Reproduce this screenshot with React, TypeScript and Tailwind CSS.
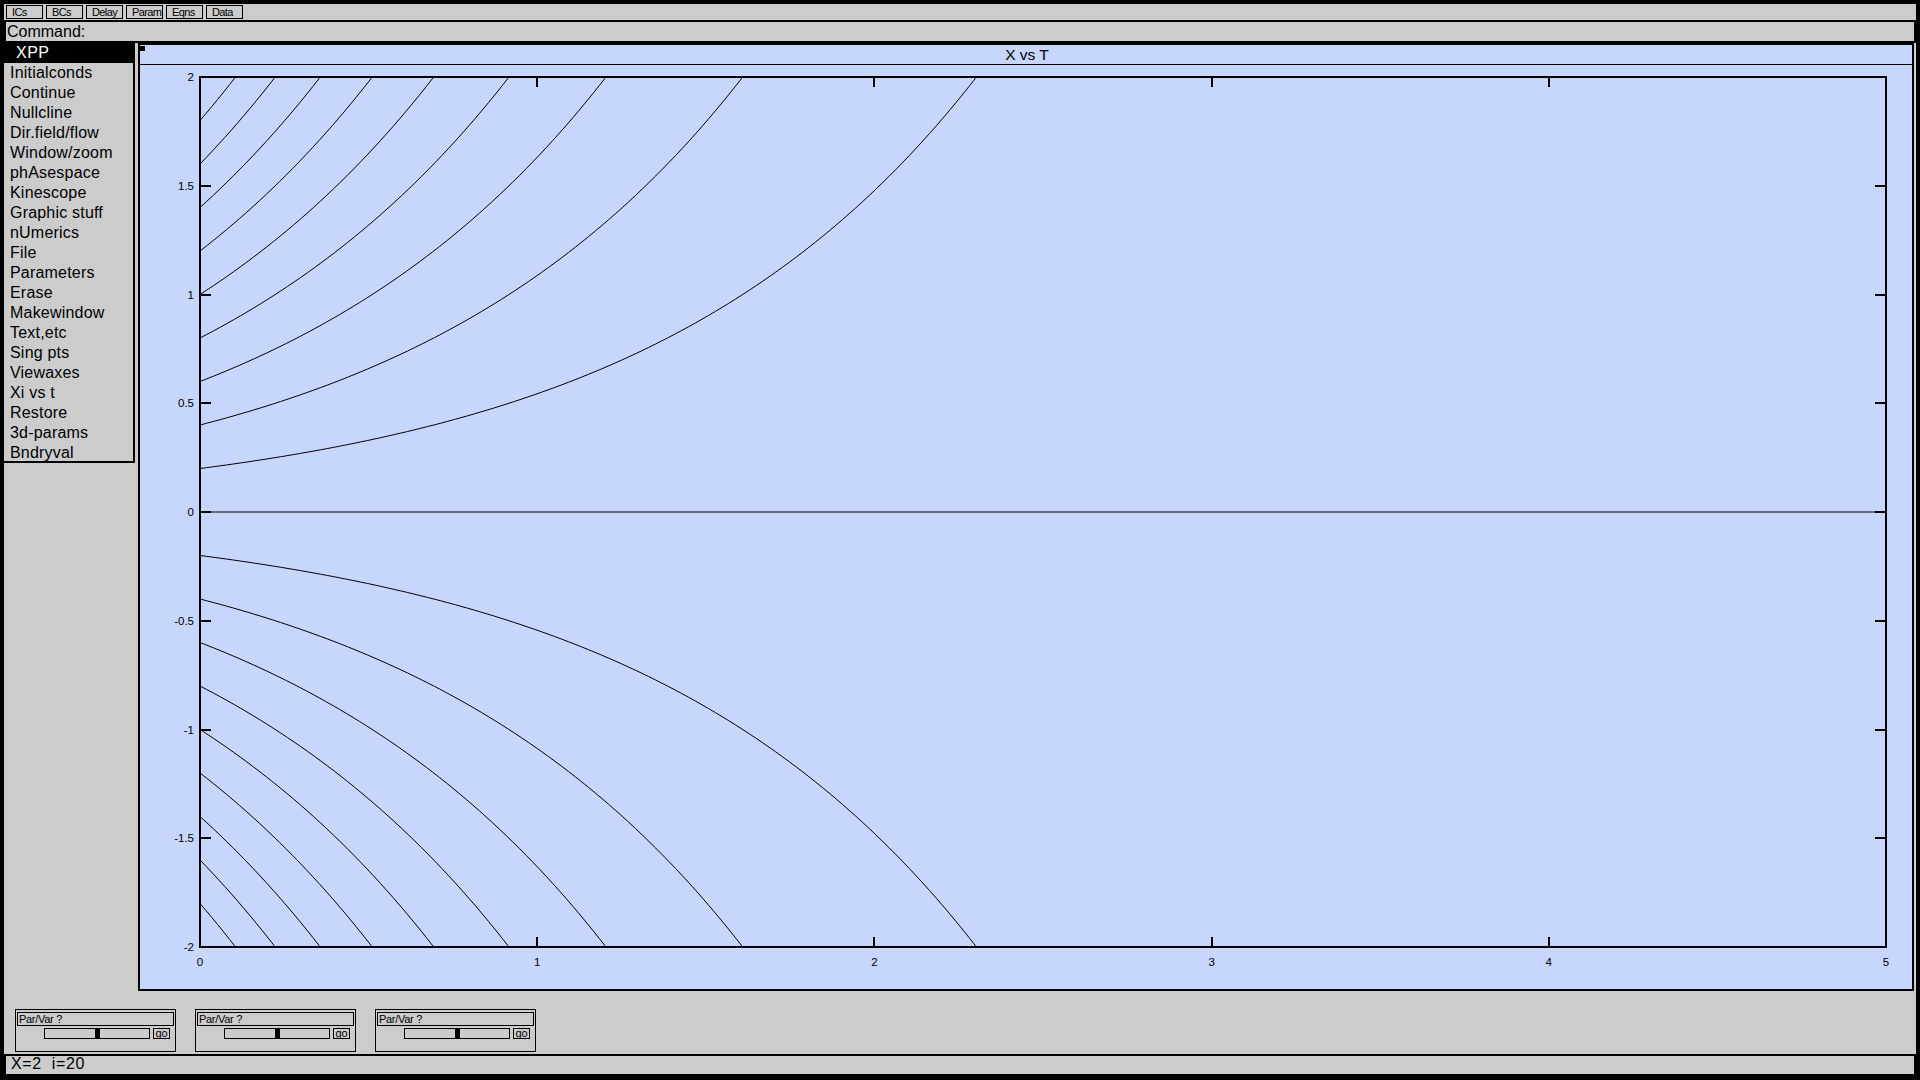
import React from 'react';

const GRAY = 'bg-[#cccccc]';

const toolButtons = ['ICs', 'BCs', 'Delay', 'Param', 'Eqns', 'Data'];

const menuItems = [
  'Initialconds',
  'Continue',
  'Nullcline',
  'Dir.field/flow',
  'Window/zoom',
  'phAsespace',
  'Kinescope',
  'Graphic stuff',
  'nUmerics',
  'File',
  'Parameters',
  'Erase',
  'Makewindow',
  'Text,etc',
  'Sing pts',
  'Viewaxes',
  'Xi vs t',
  'Restore',
  '3d-params',
  'Bndryval',
];

// axes box in page coordinates
const AX = { x0: 200, x1: 1886, y0: 77, y1: 947 };
const T_MAX = 5;
const X_MIN = -2;
const X_MAX = 2;

const sx = (t: number) => AX.x0 + (t / T_MAX) * (AX.x1 - AX.x0);
const sy = (v: number) => AX.y0 + ((X_MAX - v) / (X_MAX - X_MIN)) * (AX.y1 - AX.y0);

// x' = x, so x(t) = x0 * e^t, cut off at the window edge
const buildCurve = (x0: number) => {
  if (x0 === 0) return `M${sx(0)},${sy(0)} L${sx(T_MAX)},${sy(0)}`;
  const tEnd = Math.min(T_MAX, Math.log(2 / Math.abs(x0)));
  const pts: string[] = [];
  const steps = Math.max(2, Math.ceil(tEnd / 0.02));
  for (let i = 0; i <= steps; i++) {
    const t = (tEnd * i) / steps;
    pts.push(`${sx(t).toFixed(2)},${sy(x0 * Math.exp(t)).toFixed(2)}`);
  }
  return 'M' + pts.join(' L');
};

const initials: number[] = [];
for (let k = 1; k <= 10; k++) {
  initials.push(+(k * 0.2).toFixed(1));
  initials.push(-+(k * 0.2).toFixed(1));
}
initials.push(0);

const yTicks = [2, 1.5, 1, 0.5, 0, -0.5, -1, -1.5, -2];
const xTicks = [0, 1, 2, 3, 4, 5];

const PlotCanvas: React.FC = () => (
  <svg width={1772} height={924} viewBox="140 65 1772 924" className="block">
    {/* curves */}
    {initials.map(x0 => (
      <path key={x0} d={buildCurve(x0)} fill="none" stroke="#000" strokeWidth={1} />
    ))}

    {/* axes frame */}
    <rect
      x={AX.x0}
      y={AX.y0}
      width={AX.x1 - AX.x0}
      height={AX.y1 - AX.y0}
      fill="none"
      stroke="#000"
      strokeWidth={2}
      shapeRendering="crispEdges"
    />

    {/* y ticks + labels */}
    {yTicks.map(v => (
      <g key={`y${v}`}>
        <line x1={AX.x0} x2={AX.x0 + 11} y1={sy(v)} y2={sy(v)} stroke="#000" strokeWidth={2} shapeRendering="crispEdges" />
        <line x1={AX.x1 - 11} x2={AX.x1} y1={sy(v)} y2={sy(v)} stroke="#000" strokeWidth={2} shapeRendering="crispEdges" />
        <text
          x={194}
          y={sy(v) + 4}
          textAnchor="end"
          fontSize={11.5}
          fontFamily="'Liberation Sans', Arial, sans-serif"
          fill="#000"
        >
          {v}
        </text>
      </g>
    ))}

    {/* x ticks + labels */}
    {xTicks.map(t => (
      <g key={`x${t}`}>
        <line x1={sx(t)} x2={sx(t)} y1={AX.y0} y2={AX.y0 + 10} stroke="#000" strokeWidth={2} shapeRendering="crispEdges" />
        <line x1={sx(t)} x2={sx(t)} y1={AX.y1 - 10} y2={AX.y1} stroke="#000" strokeWidth={2} shapeRendering="crispEdges" />
        <text
          x={sx(t)}
          y={966}
          textAnchor="middle"
          fontSize={11.5}
          fontFamily="'Liberation Sans', Arial, sans-serif"
          fill="#000"
        >
          {t}
        </text>
      </g>
    ))}
  </svg>
);

const SliderBox: React.FC = () => (
  <div className="w-[161px] h-[43px] border border-black flex flex-col">
    <div className="ml-px mt-[2px] w-[157px] h-[14px] border border-black flex items-center pl-px">
      <span className="text-[11px] leading-none tracking-[-0.3px]">Par/Var ?</span>
    </div>
    <div className="flex mt-[2px] ml-[28px] items-stretch h-[11px]">
      <div className="w-[106px] border border-black relative">
        <div className="absolute left-[50px] top-0 bottom-0 w-[5px] bg-black" />
      </div>
      <div className="ml-[3px] w-[17px] border border-black flex items-center justify-center">
        <span className="text-[11px] leading-none -mt-px">go</span>
      </div>
    </div>
  </div>
);

export default function App() {
  return (
    <div
      className="w-[1920px] h-[1080px] bg-black flex flex-col overflow-hidden text-black"
      style={{ fontFamily: "'Liberation Sans', Arial, sans-serif" }}
    >
      {/* top buttons */}
      <div className={`mt-[4px] mx-[4px] h-[16px] ${GRAY} flex items-center gap-[3px] pl-[2px]`}>
        {toolButtons.map(b => (
          <div
            key={b}
            className="w-[37px] h-[14px] border border-black flex items-center pl-[5px] text-[11px] leading-none tracking-[-0.6px]"
          >
            {b}
          </div>
        ))}
      </div>

      {/* command line */}
      <div className={`mt-[2px] mx-[6px] h-[19px] ${GRAY} flex items-center pl-px text-[16px] leading-none`}>
        Command:
      </div>

      {/* main area */}
      <div className={`mt-[2px] mx-[4px] h-[1011px] ${GRAY} flex flex-col`}>
        <div className="flex h-[948px]">
          {/* main menu */}
          <div className="w-[131px] h-[420px] border-r-2 border-b-2 border-black flex flex-col">
            <div className="h-[20px] bg-black text-white text-[16px] leading-[20px] pl-[12px] tracking-[0.5px]">
              XPP
            </div>
            {menuItems.map(item => (
              <div key={item} className="h-[20px] text-[16px] leading-[20px] pl-[6px] whitespace-nowrap tracking-[0.2px]">
                {item}
              </div>
            ))}
          </div>

          {/* graphics window */}
          <div className="ml-[3px] w-[1776px] h-[948px] border-2 border-black bg-[#c6d6fc] flex flex-col relative">
            <div className="absolute left-0 top-px w-[5px] h-[5px] bg-black" />
            <div className="h-[20px] border-b border-black flex items-center justify-center text-[15.5px] leading-none pl-[2px]">
              X vs T
            </div>
            <PlotCanvas />
          </div>
        </div>

        {/* parameter sliders */}
        <div className="flex gap-[19px] ml-[11px] mt-[18px]">
          <SliderBox />
          <SliderBox />
          <SliderBox />
        </div>
      </div>

      {/* status line */}
      <div className={`mt-[2px] mx-[6px] h-[18px] ${GRAY} flex items-center pl-[5px] text-[16px] leading-none whitespace-pre tracking-[0.6px]`}>
        <span className="-mt-[2px]">{'X=2  i=20'}</span>
      </div>
    </div>
  );
}
